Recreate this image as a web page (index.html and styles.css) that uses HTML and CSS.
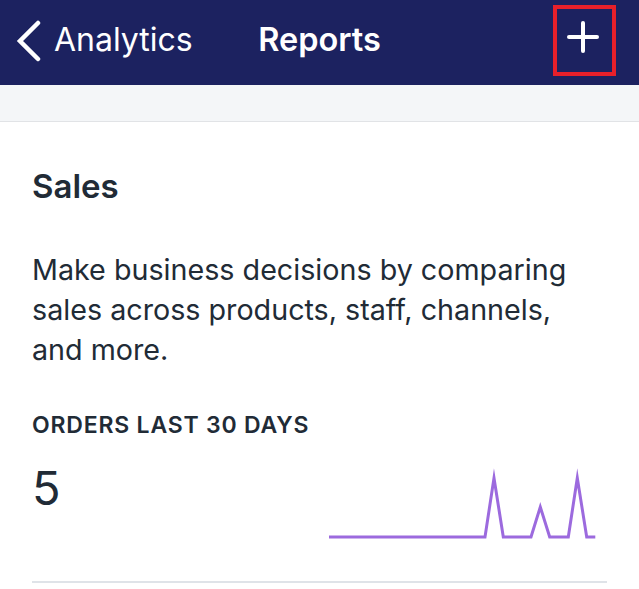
FILE: index.html
```html
<!DOCTYPE html>
<html lang="en">
<head>
<meta charset="utf-8">
<title>Reports</title>
<link rel="stylesheet" href="styles.css">
</head>
<body>
<header class="navbar">
  <div class="nav-left">
    <a class="back" href="#">
      <svg class="chevron" width="26" height="42" viewBox="0 0 26 42" aria-hidden="true">
        <polyline points="22,3 4,21 22,39" fill="none" stroke="#fff" stroke-width="4.5" stroke-linecap="round" stroke-linejoin="miter"/>
      </svg>
      <span class="back-label">Analytics</span>
    </a>
  </div>
  <h1 class="nav-title">Reports</h1>
  <div class="nav-right">
    <button class="add-btn" type="button" aria-label="Add report">
      <svg width="32" height="32" viewBox="0 0 32 32" aria-hidden="true">
        <line x1="16" y1="2" x2="16" y2="30" stroke="#fff" stroke-width="4" stroke-linecap="round"/>
        <line x1="2" y1="16" x2="30" y2="16" stroke="#fff" stroke-width="4" stroke-linecap="round"/>
      </svg>
    </button>
  </div>
</header>
<div class="strip"></div>
<main class="card">
  <h2 class="card-title">Sales</h2>
  <p class="card-text">Make business decisions by comparing sales across products, staff, channels, and more.</p>
  <div class="metric-label">ORDERS LAST 30 DAYS</div>
  <div class="metric-row">
    <div class="metric-value">5</div>
    <svg class="sparkline" width="278" height="80" viewBox="0 0 278 80" aria-hidden="true">
      <polyline points="0,77 156,77 165,18 174.3,77 202,77 211.3,47 220.7,77 239.3,77 248.3,18 257.7,77 266.3,77" fill="none" stroke="#9c6ade" stroke-width="3" stroke-linejoin="miter" stroke-miterlimit="10"/>
    </svg>
  </div>
  <hr class="divider">
</main>
</body>
</html>
```
FILE: styles.css
```css
html, body {
  margin: 0;
  padding: 0;
  background: #ffffff;
}
body {
  font-family: Inter, "Noto Sans", "Liberation Sans", sans-serif;
  color: #212b36;
  overflow: hidden;
}
.navbar {
  height: 85px;
  background: #1c2260;
  display: grid;
  grid-template-columns: 1fr auto 1fr;
  align-items: center;
  color: #fff;
}
.nav-left {
  padding-left: 16px;
  display: flex;
  align-items: center;
}
.back {
  display: flex;
  align-items: center;
  gap: 12px;
  color: #fff;
  text-decoration: none;
}
.chevron {
  display: block;
  margin-top: -4px;
}
.back-label {
  font-size: 32px;
  font-weight: 400;
  line-height: 40px;
  margin-top: -6px;
}
.nav-title {
  margin: 0;
  margin-top: -6px;
  font-size: 32.5px;
  font-weight: 600;
  line-height: 40px;
}
.nav-right {
  display: flex;
  justify-content: flex-end;
  padding-right: 23px;
  align-self: start;
  padding-top: 5px;
}
.add-btn {
  width: 63px;
  height: 71px;
  box-sizing: border-box;
  border: 4px solid #e8202a;
  background: transparent;
  padding: 12px 0 0 0;
  margin: 0;
  display: flex;
  justify-content: center;
  align-items: flex-start;
}
.add-btn svg {
  display: block;
  margin-left: -3px;
}
.strip {
  height: 36px;
  background: #f4f6f8;
  border-bottom: 1px solid #e1e3e6;
}
.card {
  padding: 44px 32px 0 32px;
}
.card-title {
  margin: 0;
  font-size: 33px;
  font-weight: 600;
  line-height: 40px;
}
.card-text {
  margin: 44px 0 0 0;
  font-size: 28.7px;
  line-height: 40px;
  font-weight: 400;
}
.metric-label {
  margin-top: 41px;
  font-size: 23px;
  line-height: 28px;
  font-weight: 600;
  letter-spacing: 0.8px;
}
.metric-row {
  margin-top: 21px;
  display: flex;
  justify-content: space-between;
  align-items: flex-start;
  height: 80px;
}
.metric-value {
  font-size: 47px;
  line-height: 56px;
  font-weight: 400;
}
.sparkline {
  display: block;
}
.divider {
  margin: 41px 0 0 0;
  border: 0;
  height: 2px;
  background: #dfe3e8;
}
```
